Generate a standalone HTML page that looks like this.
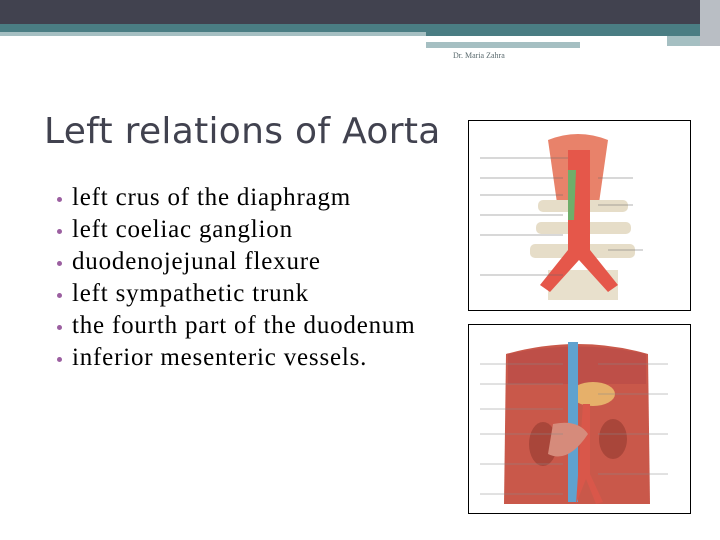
<!DOCTYPE html>
<html><head><style>
body{margin:0;width:720px;height:540px;background:#fff;position:relative;overflow:hidden;font-family:"Liberation Serif",serif}
.a{position:absolute}
ul{position:absolute;left:50px;top:182px;margin:0;padding:0;list-style:none}
li{font-size:25px;letter-spacing:0.8px;line-height:32px;height:32px;color:#000;white-space:nowrap;position:relative;padding-left:22px}
li:before{content:"";position:absolute;left:7px;top:15px;width:5px;height:5px;border-radius:50%;background:#9b5fa0}
</style></head><body>
<div class="a" style="left:0;top:0;width:720px;height:24px;background:#41424f"></div>
<div class="a" style="left:0;top:24px;width:720px;height:8px;background:#4a7d83"></div>
<div class="a" style="left:0;top:32px;width:426px;height:4px;background:#a5bfc2"></div>
<div class="a" style="left:426px;top:32px;width:294px;height:4px;background:#4a7d83"></div>
<div class="a" style="left:667px;top:36px;width:40px;height:10px;background:#a5bfc2"></div>
<div class="a" style="left:426px;top:42px;width:154px;height:6px;background:#a5bfc2"></div>
<div class="a" style="left:700px;top:0;width:20px;height:46px;background:#b9bec4"></div>
<div class="a" style="left:453px;top:51px;font-size:8px;color:#5a6a6e">Dr. Maria Zahra</div>
<div class="a" style="left:44px;top:111px;font-family:'DejaVu Sans',sans-serif;font-size:36px;letter-spacing:0.3px;color:#41424f;white-space:nowrap">Left relations of Aorta</div>
<ul>
<li>left crus of the diaphragm</li>
<li>left coeliac ganglion</li>
<li>duodenojejunal flexure</li>
<li>left sympathetic trunk</li>
<li>the fourth part of the duodenum</li>
<li>inferior mesenteric vessels.</li>
</ul>
<svg class="a" style="left:468px;top:120px" width="224" height="192">
<rect x="0.5" y="0.5" width="222" height="190" fill="#fff" stroke="#000"/>
<path d="M80 20 Q110 8 140 20 L130 90 L90 90Z" fill="#e8826a"/>
<rect x="70" y="80" width="90" height="12" rx="5" fill="#e6ddc8"/>
<rect x="68" y="102" width="95" height="12" rx="5" fill="#e6ddc8"/>
<rect x="62" y="124" width="105" height="14" rx="5" fill="#e6ddc8"/>
<rect x="80" y="150" width="70" height="30" fill="#e8e0cc"/>
<path d="M100 30 L122 30 L122 130 L150 165 L140 172 L111 140 L82 172 L72 165 L100 130Z" fill="#e5574a"/>
<path d="M100 50 L108 50 L106 100 L100 100Z" fill="#6fae6a"/>
<g stroke="#666" stroke-width="0.6"><line x1="12" y1="38" x2="100" y2="38"/><line x1="12" y1="58" x2="95" y2="58"/><line x1="12" y1="75" x2="95" y2="75"/><line x1="12" y1="95" x2="95" y2="95"/><line x1="12" y1="115" x2="95" y2="115"/><line x1="12" y1="155" x2="95" y2="155"/><line x1="130" y1="58" x2="165" y2="58"/><line x1="130" y1="85" x2="165" y2="85"/><line x1="140" y1="130" x2="175" y2="130"/></g>
</svg>
<svg class="a" style="left:468px;top:324px" width="224" height="191">
<rect x="0.5" y="0.5" width="222" height="189" fill="#fff" stroke="#000"/>
<path d="M38 30 Q110 10 180 30 L182 180 L36 180Z" fill="#c9584a"/>
<path d="M40 30 Q110 15 178 30 L178 60 L40 60Z" fill="#b84a48" opacity="0.6"/>
<ellipse cx="75" cy="120" rx="14" ry="22" fill="#a9463a"/>
<ellipse cx="145" cy="115" rx="14" ry="20" fill="#a9463a"/>
<ellipse cx="125" cy="70" rx="22" ry="12" fill="#e6b06a"/>
<rect x="100" y="18" width="10" height="160" fill="#5fa2cf"/>
<path d="M115 80 L122 80 L122 150 L135 178 L128 180 L118 155 L108 180Z" fill="#d9574a"/>
<path d="M85 100 Q110 95 120 110 Q100 140 80 130Z" fill="#d68b7b"/>
<g stroke="#888" stroke-width="0.5"><line x1="12" y1="40" x2="95" y2="40"/><line x1="12" y1="60" x2="95" y2="60"/><line x1="12" y1="85" x2="95" y2="85"/><line x1="12" y1="110" x2="95" y2="110"/><line x1="12" y1="140" x2="95" y2="140"/><line x1="12" y1="170" x2="95" y2="170"/><line x1="130" y1="40" x2="200" y2="40"/><line x1="130" y1="70" x2="200" y2="70"/><line x1="130" y1="110" x2="200" y2="110"/><line x1="130" y1="150" x2="200" y2="150"/></g>
</svg>
</body></html>
